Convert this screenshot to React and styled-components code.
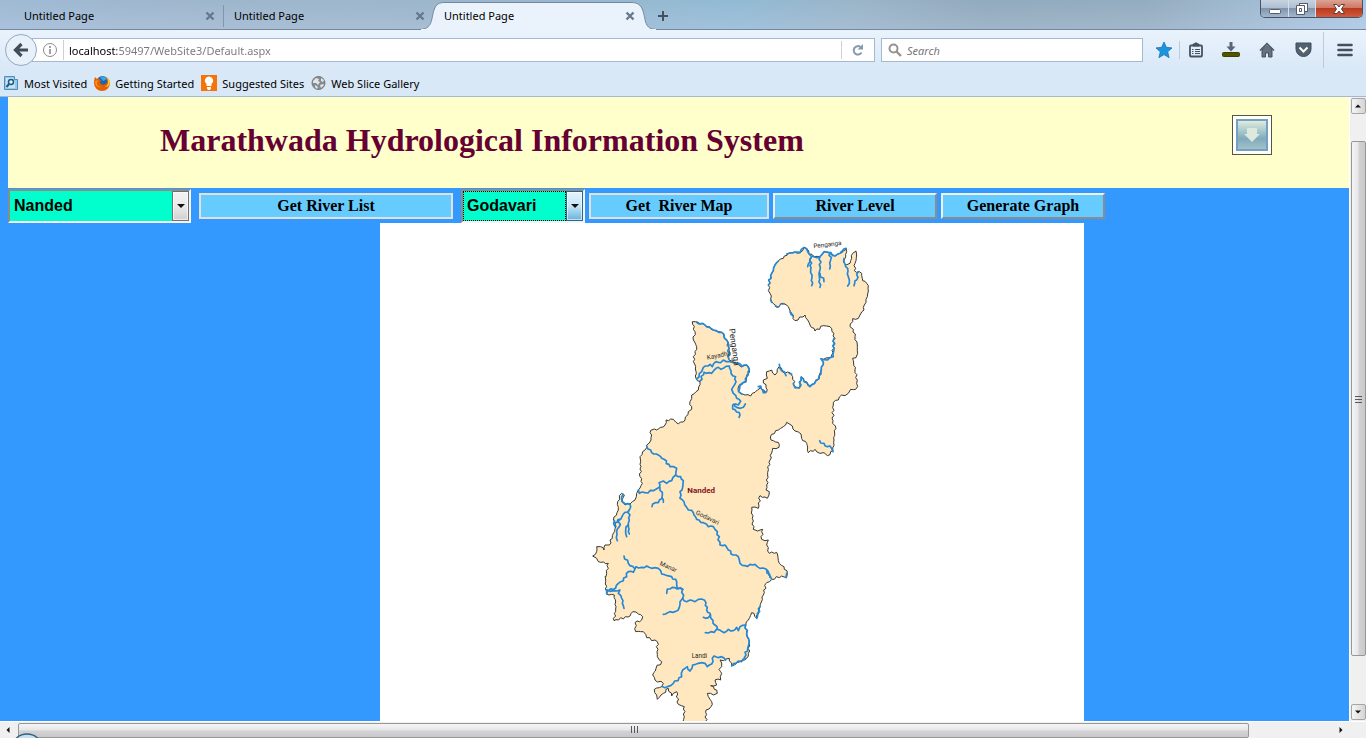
import React from "react";
import styled, { createGlobalStyle, css } from "styled-components";

const GlobalStyle = createGlobalStyle`
  *, *::before, *::after { box-sizing: border-box; }
  body { margin: 0; overflow: hidden; }
  button, input, select { font: inherit; color: inherit; margin: 0; }
  svg { display: block; }
`;

const uiFont = `"Noto Sans", "Open Sans", sans-serif`;

const Window = styled.div`
  display: flex;
  flex-direction: column;
  height: 100vh;
  font-family: ${uiFont};
  font-size: 11px;
  color: #000;
`;

/* Title bar and tabs */

const TitleBar = styled.header`
  display: flex;
  align-items: flex-start;
  height: 30px;
  padding: 0 3px 0 14px;
  border-bottom: 1px solid #7388a0;
  background:
    linear-gradient(180deg, rgba(150, 178, 200, 0.4), rgba(176, 196, 218, 0.5)),
    linear-gradient(90deg, #a4bfdc 0, #a3b9cf 15%, #9fb8cd 32%, #90c0dc 54%, #9db6c8 63%, #8fa5b6 72%, #93a9ba 84%, #a9c4dc 93%, #b9d6f5 100%);
`;

const Tabs = styled.nav`
  display: flex;
  flex: 1;
`;

const Tab = styled.div`
  position: relative;
  display: flex;
  align-items: center;
  justify-content: space-between;
  width: 210px;
  height: 30px;
  padding: 2px 9px 0 10px;
`;

const TabDivider = styled.span`
  width: 1px;
  height: 22px;
  margin: 5px 0 0 -1px;
  background: #8295a9;
`;

const TabShape = styled.svg`
  position: absolute;
  left: -18px;
  top: 0;
`;

const TabLabel = styled.button`
  position: relative;
  padding: 0;
  border: 0;
  background: none;
  line-height: 16px;
`;

const PlainButton = styled.button`
  position: relative;
  display: flex;
  align-items: center;
  justify-content: center;
  padding: 0;
  border: 0;
  background: none;
`;

const NewTabButton = styled(PlainButton)`
  width: 38px;
  height: 32px;
`;

const WindowControls = styled.div`
  display: flex;
  height: 18px;
  border: 1px solid #44536a;
  border-top: 0;
  border-radius: 0 0 5px 5px;
  overflow: hidden;
`;

const ControlButton = styled(PlainButton)`
  width: ${(p) => (p.$close ? 47 : 27)}px;
  border-left: ${(p) => (p.$first ? 0 : 1)}px solid #d5e0ec;
  background: ${(p) =>
    p.$close
      ? "linear-gradient(180deg, #dda293 0, #cf7866 45%, #b93a20 50%, #d3593d 100%)"
      : "linear-gradient(180deg, #c6d2df 0, #b0bfd0 45%, #7f95ad 50%, #a4b8cc 100%)"};
`;

/* Navigation and bookmarks */

const Toolbars = styled.div`
  border-bottom: 1px solid #a5b8d0;
  background: linear-gradient(180deg, #eaf3fc 0, #d9e8f7 60%, #d9e8f7 100%);
`;

const NavBar = styled.div`
  display: flex;
  align-items: center;
  height: 40px;
  padding-left: 5px;
`;

const BackButton = styled(PlainButton)`
  z-index: 1;
  width: 32px;
  height: 32px;
  border: 1px solid #93a9c2;
  border-radius: 50%;
  background: #e8f1fa;
`;

const Field = styled.label`
  display: flex;
  align-items: center;
  height: 24px;
  border: 1px solid #a4b8cf;
  background: #fff;
`;

const AddressField = styled(Field)`
  flex: 1;
  margin: 0 6px 0 -5px;
  padding-left: 9px;
`;

const SearchField = styled(Field)`
  width: 262px;
  padding-left: 6px;
  gap: 5px;
`;

const TextInput = styled.input`
  flex: 1;
  min-width: 0;
  height: 20px;
  padding: 0;
  border: 0;
  outline: 0;
  background: none;
  &::placeholder {
    color: #777;
    font-style: italic;
    opacity: 1;
  }
`;

const AddressInput = styled(TextInput)`
  margin-left: 5px;
  padding-left: 5px;
  border-left: 1px solid #d0d0d0;
  background: linear-gradient(90deg, #000 53px, #777 53px);
  background-clip: text;
  color: transparent;
`;

const ReloadButton = styled(PlainButton)`
  width: 33px;
  height: 18px;
  border-left: 1px solid #d0d0d0;
`;

const ToolButton = styled(PlainButton)`
  width: ${(p) => p.$width}px;
  height: ${(p) => p.$height || 18}px;
  margin-left: ${(p) => p.$before || 0}px;
  ${(p) => p.$divided && css`border-left: 1px solid #bccbdc;`}
`;

const Bookmarks = styled.nav`
  display: flex;
  align-items: center;
  gap: 7px;
  height: 26px;
  padding-left: 3px;
`;

const BookmarkLink = styled.a`
  display: flex;
  align-items: center;
  gap: 5px;
  color: #000;
  text-decoration: none;
  white-space: nowrap;
`;

/* Page */

const Viewport = styled.div`
  display: flex;
  flex: 1;
  min-height: 0;
`;

const PageArea = styled.div`
  flex: 1;
  min-width: 0;
  padding-left: 8px;
  overflow: hidden;
  background: #3399ff;
`;

const Page = styled.main`
  width: 108%;
`;

const Banner = styled.div`
  display: flex;
  align-items: flex-start;
  justify-content: space-between;
  height: 91px;
  padding: 18px 184px 0 152px;
  background: #ffffcc;
`;

const Title = styled.h1`
  margin: 0;
  color: #660033;
  font: bold 32px/50px "Liberation Serif", "Times New Roman", serif;
`;

const DownloadButton = styled(PlainButton)`
  width: 40px;
  height: 40px;
  border: 1px solid #555540;
  background: #fffffb;
`;

const Controls = styled.form`
  display: flex;
  align-items: center;
  gap: 4px;
  height: 35px;
`;

const SelectBox = styled.label`
  display: flex;
  width: ${(p) => p.$width}px;
  height: 34px;
  border: 2px solid;
  border-color: #8c8c88 #f4f4f4 #f4f4f4 #8c8c88;
  background: #00ffcc;
`;

const Select = styled.select`
  flex: 1;
  min-width: 0;
  padding: 0 4px;
  border: 0;
  outline: ${(p) => (p.$focused ? "1px dotted #000" : "0")};
  outline-offset: -1px;
  appearance: none;
  background: #00ffcc;
  font: bold 16px/20px "Liberation Sans", Arial, sans-serif;
`;

const SelectArrow = styled.span`
  display: flex;
  align-items: center;
  justify-content: center;
  width: 17px;
  border: 1px solid ${(p) => (p.$focused ? "#2c628b" : "#707070")};
  background: ${(p) =>
    p.$focused
      ? "linear-gradient(180deg, #e5f4fc 0, #c4e5f6 50%, #68b3db 100%)"
      : "linear-gradient(180deg, #f2f2f2 0, #ebebeb 50%, #cfcfcf 100%)"};
  box-shadow: inset 0 0 0 1px rgba(255, 255, 255, 0.6);
`;

const ActionButton = styled.button`
  width: ${(p) => p.$width}px;
  height: 26px;
  margin: ${(p) => (p.$spaced ? "0 4px" : "0")};
  padding: 0;
  border: 2px solid;
  border-color: ${(p) => (p.$raised ? "#f0f0ec #8c8c8c #8c8c8c #f0f0ec" : "#e0e0e0")};
  background: #66ccff;
  font: bold 16px/20px "Liberation Serif", "Times New Roman", serif;
  white-space: pre;
`;

const MapPanel = styled.section`
  width: 704px;
  margin: 0 auto;
  background: #fff;
`;

/* Scroll bars */

const VerticalScroll = styled.div`
  display: flex;
  flex-direction: column;
  align-items: center;
  justify-content: space-between;
  width: 17px;
  padding: 1px 0;
  background: #f0f0f0;
  border-left: 1px solid #fff;
`;

const ScrollArrow = styled(PlainButton)`
  width: 15px;
  height: 16px;
  ${(p) => p.$framed && css`
    border: 1px solid #a6a6a6;
    border-radius: 2px;
    background: linear-gradient(90deg, #f6f6f6, #d4d4d4);
  `}
`;

const VerticalTrack = styled.div`
  flex: 1;
  width: 15px;
  padding: 27px 0 48px;
`;

const Thumb = styled.div`
  display: flex;
  align-items: center;
  justify-content: center;
  height: 100%;
  border: 1px solid #979797;
  border-radius: 2px;
  background: linear-gradient(${(p) => (p.$horizontal ? 180 : 90)}deg, #f5f5f5 0, #e6e6e8 48%, #d3d3d6 52%, #c9c9cc 100%);
`;

const HorizontalScroll = styled.div`
  display: flex;
  align-items: center;
  position: relative;
  height: 17px;
  padding-right: 18px;
  background: #f0f0f0;
  border-top: 1px solid #fff;
  overflow: hidden;
`;

const HorizontalTrack = styled.div`
  flex: 1;
  height: 15px;
  padding: 0 6.2% 0 3px;
`;

const LoadingRing = styled.svg`
  position: absolute;
  left: 12px;
  top: 11px;
`;

/* Map geometry. One map unit is a third of a pixel. Points are grouped by sheet,
   and each sheet has its own origin inside the map. */

const SHEETS = { ne: [1080, 21], nw: [750, 261], mid: [600, 621], south: [600, 1041] };

const place = (sheet, text) => {
  const [dx, dy] = SHEETS[sheet];
  return text.trim().split(/\s+/).map((pair) => {
    const [x, y] = pair.split(",").map(Number);
    return [x + dx, y + dy];
  });
};

/* Breaks long segments into short uneven ones, as surveyed banks are. */
const roughen = (points, size) => {
  const out = [];
  points.forEach((p, i) => {
    out.push(p);
    const q = points[i + 1];
    if (!q) return;
    const dx = q[0] - p[0];
    const dy = q[1] - p[1];
    const len = Math.hypot(dx, dy);
    const parts = Math.min(8, Math.floor(len / 7));
    for (let k = 1; k < parts; k += 1) {
      const t = k / parts;
      const shift = Math.sin((i + 1) * 5.3 + k * 2.7) * size;
      out.push([p[0] + dx * t - (dy / len) * shift, p[1] + dy * t + (dx / len) * shift]);
    }
  });
  return out;
};

const toPath = (points) => "M" + points.map(([x, y]) => `${Math.round(x)} ${Math.round(y)}`).join("L");

const border = toPath(roughen([
  ...place("ne", `85,165 95,130 105,105 115,93 130,85 145,70 165,66 180,68 192,52 200,55 207,72 222,80 240,80 252,65
    265,67 285,78 300,70 318,55 320,65 312,90 318,105 330,100 338,70 348,63 350,75 345,100 343,122 365,130 368,152
    380,160 384,175 382,200 373,225 372,240 360,255 355,265 338,266 330,290 340,298 345,320 352,345 353,370 348,383
    338,385 345,420 352,450 353,470 347,478 332,478 325,490 315,497 305,495 295,510 280,517 278,580 286,588 282,630
    279,662 262,677 252,668 240,670 225,658 205,668 200,640 185,625 183,612 165,603 150,583 140,577 130,590 115,600
    95,613 93,630 115,637 117,652 98,655 90,690 85,718`),
  ...place("mid", `565,120 560,165 558,180 568,185 562,205 540,197 535,235 515,232 517,265 520,298 533,303 548,298
    545,328 565,330 560,345 568,370 590,367 598,400 612,410 622,430 620,442 605,438 575,448 560,458`),
  ...place("south", `558,40 550,75 540,110 530,145 522,130 515,128 505,150 497,165 500,190 508,220 505,250 500,265
    480,275 455,287 448,265 430,272 420,270 425,290 417,298 425,310 422,330 405,330 410,345 392,347 410,360 412,370
    400,375 382,370 390,388 395,395 393,410 378,420 378,470 310,470 313,410 295,403 290,365 280,370 275,378 265,355
    250,370 232,388 230,375 223,358 245,350 250,340 225,330 218,315 228,295 245,275 232,260 232,215 200,203 190,185
    167,185 165,158 185,150 188,140 175,132 158,125 150,138 102,152 108,110 103,75 80,72 75,20`),
  ...place("mid", `78,440 80,430 85,400 55,395 50,385 38,378 50,365 50,350 62,350 72,360 75,345 88,345 100,310 108,290
    105,275 100,270 115,240 113,215 125,190 133,195 125,215 135,225 150,222 165,210 170,190 175,180 187,160 180,140
    183,110 180,80 195,60 200,45 213,30 213,0`),
  ...place("nw", `65,360 80,360 105,345 108,330 130,328 145,342 165,330 175,305 185,298 180,275 185,255 205,240
    210,215 198,205 197,170 190,155 195,125 200,110 190,90 195,65 187,35 205,37 225,45 250,60 275,67 290,90 297,120
    297,150 310,155 325,160 335,170 350,165 358,180 350,200 348,215 328,225 325,245 345,255 362,258 375,247 390,235
    392,228 405,250 412,240 400,210 412,205 410,185 425,180 435,195 447,170`),
  ...place("ne", `117,410 135,430 150,428 158,440 165,470 178,475 183,440 210,470 238,445 242,425 250,395 242,387
    275,382 282,340 282,310 270,290 250,287 225,303 210,285 195,255 165,272 155,250 145,230 130,220 110,232 95,215
    90,190 85,165`),
], 3)) + "Z";

const rivers = [
  ["ne", "85,165 95,130 105,105 115,93"],
  ["ne", "140,72 150,69 165,66 180,68 192,52 200,57 207,72 222,80 240,80 252,65 265,67 285,78 300,70 318,55"],
  ["ne", "92,210 95,217"],
  ["ne", "106,228 114,231"],
  ["ne", "125,222 132,222"],
  ["ne", "150,245 160,258"],
  ["ne", "215,80 210,95 203,110"],
  ["ne", "212,85 212,120 216,135 215,167"],
  ["ne", "240,80 240,120 238,140 240,172"],
  ["ne", "240,130 252,155"],
  ["ne", "269,68 272,90 269,117"],
  ["ne", "312,85 315,102 323,115 325,140 328,150 323,168"],
  ["ne", "355,125 350,150 345,152 342,167"],
  ["ne", "282,325 280,380 262,390 243,386 250,397 244,412 243,432 236,447 210,470 183,442 179,472 166,474 160,460"],
  ["ne", "118,403 120,415 133,425 138,437"],
  ["ne", "148,430 155,432"],
  ["ne", "239,632 255,647 270,648 279,665"],
  ["nw", "200,37 225,45 250,60 275,67 290,90 295,100 296,145"],
  ["nw", "200,207 215,185 220,172 240,163 247,170 258,155 272,158 280,150 300,155 325,160 335,170 350,165 358,180 350,200 348,215 330,225 326,245 335,252"],
  ["nw", "210,213 222,187 245,190 258,175 280,175 298,168 303,190 317,200 315,222 305,238 310,250 320,265 332,273 325,285 308,285 308,297 328,308 327,322"],
  ["nw", "312,282 322,293 340,292 346,282"],
  ["nw", "385,230 392,228 400,248 410,245"],
  ["mid", "200,48 215,68 235,75 252,88 270,110 290,115 287,135 302,140 310,152 308,172 300,185 300,205 312,215 320,232 340,248 350,268 370,278 385,290 400,290 412,305 420,345 435,345 445,360 460,375 475,380 480,400 495,407 525,403 540,415 558,417 567,435 575,448"],
  ["mid", "287,135 275,152 260,160 250,153 237,158 238,172 220,182 195,188 178,190 175,180"],
  ["mid", "240,173 247,195 250,217"],
  ["mid", "247,205 235,218 218,222 216,230"],
  ["mid", "130,193 125,208 135,222 150,222 148,240 130,252 122,268 103,278"],
  ["mid", "118,268 118,290 110,305 112,332"],
  ["mid", "147,240 148,270 145,290 148,312"],
  ["mid", "145,285 137,300 140,320"],
  ["mid", "103,272 105,290"],
  ["mid", "132,378 145,400 163,415"],
  ["mid", "78,479 100,479 115,460 130,452 145,425 160,427 168,410 185,412 200,408 215,415 235,415 245,432 262,437 275,440 290,455 292,475 308,478"],
  ["mid", "620,430 618,443"],
  ["south", "80,60 100,62 120,60 115,70 125,85 132,115"],
  ["south", "80,60 80,72"],
  ["south", "308,58 285,53 262,57 260,70"],
  ["south", "308,58 308,85 300,95 298,112 285,125 270,125 250,133"],
  ["south", "308,85 320,95 330,90 345,95 355,88 373,90 378,98 380,120 390,130 393,145 405,165 412,178 432,188 445,178 460,182 470,172 475,182 480,170 497,165"],
  ["south", "370,142 385,143 392,135"],
  ["south", "376,188 393,185 403,187 412,176"],
  ["south", "497,165 500,190 508,215 503,235 493,262"],
  ["south", "497,265 485,275 475,273 455,288"],
  ["south", "248,350 262,350 272,347 280,340 305,320 308,300 322,290 330,303 338,285 355,280 375,280 382,290 395,282 402,258 415,263 425,260 437,270"],
  ["south", "540,110 530,145"],
  ["south", "560,0 570,22"],
].map(([sheet, text]) => toPath(roughen(place(sheet, text), 3)));

const mapFont = `Roboto, "Liberation Sans", sans-serif`;

function RiverMap() {
  return (
    <svg viewBox="0 0 2112 1494" width="100%" role="img" aria-label="River map of Nanded district">
      <path d={border} fill="#ffe8bf" stroke="#383834" strokeWidth="3" strokeLinejoin="round" />
      <g fill="none" stroke="#2388d6" strokeWidth="5" strokeLinejoin="round" strokeLinecap="round">
        {rivers.map((d) => <path key={d} d={d} />)}
      </g>
      <g fill="#2a2622" fontFamily={mapFont} fontSize="19">
        <text transform="translate(1301 76) rotate(-7)">Penganga</text>
        <text transform="translate(1047 318) rotate(82)" fontSize="25">Penganga</text>
        <text transform="translate(982 410) rotate(-11)">Kayadhu</text>
        <text transform="translate(946 873) rotate(26)">Godavari</text>
        <text transform="translate(838 1026) rotate(24)">Manar</text>
        <text x="935" y="1305">Landi</text>
      </g>
      <text x="922" y="811" fill="#84141a" fontFamily={mapFont} fontSize="24" fontWeight="bold">Nanded</text>
    </svg>
  );
}

/* Icons */

const Cross = ({ color = "#66788b" }) => (
  <svg width="10" height="10" viewBox="0 0 10 10"><path d="M1.500 1.500l7 7M8.500 1.500l-7 7" stroke={color} strokeWidth="2.4" /></svg>
);

const icons = {
  back: <svg width="18" height="18" viewBox="0 0 18 18"><path d="M9.500 3L3.500 9l6 6M4 9h12" fill="none" stroke="#414d57" strokeWidth="3.200" /></svg>,
  info: (
    <svg width="16" height="16" viewBox="0 0 16 16">
      <circle cx="8" cy="8" r="6.500" fill="none" stroke="#8b8b8b" />
      <path d="M8 7v5M8 4v2" stroke="#8b8b8b" strokeWidth="1.600" />
    </svg>
  ),
  reload: <svg width="14" height="14" viewBox="0 0 14 14"><path d="M10.500 9.500A4.200 4.200 0 1 1 9.500 4" fill="none" stroke="#8799ab" strokeWidth="2" /><path d="M6.500 6.500h5.500v-5.500z" fill="#8799ab" /></svg>,
  search: <svg width="14" height="14" viewBox="0 0 14 14"><circle cx="5.500" cy="5.500" r="4" fill="none" stroke="#939393" strokeWidth="2" /><path d="M8.500 8.500l4.500 4.500" stroke="#939393" strokeWidth="2.400" /></svg>,
  star: <svg width="18" height="18" viewBox="0 0 18 18"><path d="M9 1l2.300 5.300 5.700.6-4.300 3.900 1.400 5.900L9 13.600l-5.100 3.100 1.400-5.900L1 6.900l5.700-.6z" fill="#1c94db" stroke="#1675b8" strokeWidth=".8" /></svg>,
  list: (
    <svg width="16" height="16" viewBox="0 0 16 16" fill="none" stroke="#465361">
      <rect x="2" y="3.500" width="12" height="11" rx="1" strokeWidth="1.800" />
      <path d="M5 4V2h1.500L7 1h2l.5 1H11v2z" fill="#465361" />
      <path d="M4 7.500h1.500M7 7.500h5M4 9.500h1.500M7 9.500h5M4 11.500h1.500M7 11.500h5" />
    </svg>
  ),
  download: (
    <svg width="18" height="18" viewBox="0 0 18 18">
      <path d="M7.500 1h3v4.500h3L9 10.500 4.500 5.500h3z" fill="#596678" />
      <rect x=".5" y="11.500" width="17" height="4" rx="1" fill="#515300" stroke="#3c4200" />
    </svg>
  ),
  home: <svg width="16" height="16" viewBox="0 0 16 16"><path d="M8 3.500l5 4.500v7H9.500v-4h-3v4H3V8z" fill="#667282" stroke="#465361" /><path d="M1 8.500l7-7 7 7" fill="none" stroke="#465361" strokeWidth="1.500" /></svg>,
  pocket: <svg width="17" height="16" viewBox="0 0 17 16"><path d="M1 1h15v6a7.500 7.500 0 0 1-15 0z" fill="#536171" stroke="#414d5a" /><path d="M4.500 5.500l4 4 4-4" fill="none" stroke="#fff" strokeWidth="2" /></svg>,
  menu: <svg width="16" height="14" viewBox="0 0 16 14"><path d="M1.500 2h13M1.500 7h13M1.500 12h13" stroke="#43505d" strokeWidth="2.600" strokeLinecap="round" /></svg>,
  visited: (
    <svg width="16" height="16" viewBox="0 0 16 16">
      <path d="M1.500 1.500h10v3h3v10h-13z" fill="#9dc8e4" stroke="#4c8eb9" />
      <path d="M3 3h7v3h2v7H3z" fill="#c5e3f3" />
      <circle cx="8" cy="7" r="2.500" fill="#dff1fa" stroke="#1d5c88" strokeWidth="1.500" />
      <path d="M6 9l-2.500 3" stroke="#1d5c88" strokeWidth="2" />
    </svg>
  ),
  firefox: (
    <svg width="16" height="16" viewBox="0 0 16 16">
      <circle cx="8.500" cy="7" r="6" fill="#1e65b4" />
      <path d="M6 2c3-1 6 0 7 2L9 6z" fill="#38a7df" />
      <path d="M1 2l2 2 2-1c0 1 .5 2 2 2.500L6 7c0 3 4 4 7 1 .5-2 .3-4-1-6 3 1.500 4 4 4 6a8 8 0 0 1-16 0c0-3 .5-4 1-6z" fill="#e66000" />
      <path d="M12 2c3 3 3 8-1 10 4 0 5-3 4.800-6C15 4 14 3 12 2z" fill="#ffcb29" />
      <path d="M1 6l3-1-1 3c0 3 3 4 5 4-4 1-7-1-7-6z" fill="#f6921e" />
    </svg>
  ),
  bulb: (
    <svg width="16" height="16" viewBox="0 0 16 16">
      <rect width="16" height="16" fill="#f57409" />
      <path d="M8 1.500a4 4 0 0 1 2.500 7.200V11h-5V8.700A4 4 0 0 1 8 1.500zM6 12h4v1.500L9 15H7l-1-1.500z" fill="#fff" />
    </svg>
  ),
  globe: (
    <svg width="15" height="16" viewBox="0 0 15 16">
      <circle cx="7.500" cy="8" r="6.500" fill="#868b90" stroke="#74797e" />
      <path d="M2 6l3-3 3 1-1 2 2 1-2 3-2-2-3 0zM10 3l3 2-1 2-2-1zM9 10l3-1 1 1-3 3zM4 10l3 2-1 2-2-2z" fill="#e3e6e8" />
    </svg>
  ),
  plus: <svg width="12" height="12" viewBox="0 0 12 12"><path d="M6 1v10M1 6h10" stroke="#43525f" strokeWidth="2" /></svg>,
  minimize: <svg width="14" height="12" viewBox="0 0 14 12"><rect x="1.500" y="6.500" width="11" height="4" rx="1" fill="#fff" stroke="#535d6d" /></svg>,
  restore: (
    <svg width="14" height="14" viewBox="0 0 14 14" fill="#fff" stroke="#535d6d">
      <rect x="4.500" y="1.500" width="8" height="8" />
      <path d="M1.500 3.500h8v9h-8zM4.500 6.500h2v3h-2z" fillRule="evenodd" />
    </svg>
  ),
  close: <svg width="14" height="12" viewBox="0 0 14 12"><path d="M1.500 1.500h3.500l2 2.500 2-2.500h3.500L9.500 6l3 4.500H9L7 8l-2 2.500H1.500l3-4.500z" fill="#fff" stroke="#59413f" /></svg>,
  downArrow: (
    <svg width="32" height="32" viewBox="0 0 32 32">
      <defs>
        <linearGradient id="glass" x1="0" y1="0" x2="0" y2="1">
          <stop offset="0" stopColor="#e6f0dd" />
          <stop offset=".5" stopColor="#92b9c6" />
          <stop offset=".62" stopColor="#82aabb" />
          <stop offset="1" stopColor="#a4c4cb" />
        </linearGradient>
      </defs>
      <rect x="1" y="1" width="30" height="30" fill="url(#glass)" stroke="#74a0c4" strokeWidth="2" />
      <path d="M11 9h10v6h3l-8 8-8-8h3z" fill="#dce9dc" />
    </svg>
  ),
};

const Triangle = ({ turn = 0, size = 8 }) => (
  <svg width={size} height={size} viewBox="0 0 8 8"><path d="M0 2h8L4 6z" fill="#111" transform={`rotate(${turn} 4 4)`} /></svg>
);

const Grip = ({ turn = 0 }) => (
  <svg width="8" height="8" viewBox="0 0 8 8"><path d="M1.500 0v7M4.500 0v7M7.500 0v7" stroke="#55585c" transform={`rotate(${turn} 4 4)`} /></svg>
);

function BrowserTab({ active }) {
  return (
    <Tab>
      {active && (
        <TabShape width="246" height="30" viewBox="0 0 246 30" aria-hidden="true">
          <path d="M0 29.500H3C17 29.500 15 19 18 10C20 4 23 2.500 29 2.500H215C222 2.500 225 5 227 11C230 20 228 29.500 241 29.500H246" fill="#eaf3fc" stroke="#7388a0" />
          <path d="M5 29.500H240" stroke="#eaf3fc" strokeWidth="1" />
        </TabShape>
      )}
      <TabLabel>Untitled Page</TabLabel>
      <PlainButton aria-label="Close tab"><Cross /></PlainButton>
    </Tab>
  );
}

function Dropdown({ label, options, width, focused }) {
  return (
    <SelectBox $width={width}>
      <Select aria-label={label} $focused={focused} defaultValue={options[0]}>
        {options.map((o) => <option key={o}>{o}</option>)}
      </Select>
      <SelectArrow $focused={focused}><Triangle /></SelectArrow>
    </SelectBox>
  );
}

const bookmarks = [
  ["visited", "Most Visited"],
  ["firefox", "Getting Started"],
  ["bulb", "Suggested Sites"],
  ["globe", "Web Slice Gallery"],
];

export default function App() {
  return (
    <Window>
      <GlobalStyle />
      <TitleBar>
        <Tabs aria-label="Tabs">
          <BrowserTab />
          <TabDivider />
          <BrowserTab />
          <BrowserTab active />
          <NewTabButton aria-label="New tab">{icons.plus}</NewTabButton>
        </Tabs>
        <WindowControls>
          <ControlButton $first aria-label="Minimize">{icons.minimize}</ControlButton>
          <ControlButton aria-label="Restore">{icons.restore}</ControlButton>
          <ControlButton $close aria-label="Close">{icons.close}</ControlButton>
        </WindowControls>
      </TitleBar>
      <Toolbars>
        <NavBar>
          <BackButton aria-label="Back">{icons.back}</BackButton>
          <AddressField>
            {icons.info}
            <AddressInput aria-label="Address" defaultValue="localhost:59497/WebSite3/Default.aspx" />
            <ReloadButton aria-label="Reload">{icons.reload}</ReloadButton>
          </AddressField>
          <SearchField>
            {icons.search}
            <TextInput aria-label="Search" placeholder="Search" />
          </SearchField>
          <ToolButton $width={30} $before={6} aria-label="Bookmark">{icons.star}</ToolButton>
          <ToolButton $width={32} $divided aria-label="Bookmarks list">{icons.list}</ToolButton>
          <ToolButton $width={40} aria-label="Downloads">{icons.download}</ToolButton>
          <ToolButton $width={32} aria-label="Home">{icons.home}</ToolButton>
          <ToolButton $width={40} aria-label="Pocket">{icons.pocket}</ToolButton>
          <ToolButton $width={43} $height={36} $divided aria-label="Menu">{icons.menu}</ToolButton>
        </NavBar>
        <Bookmarks aria-label="Bookmarks">
          {bookmarks.map(([icon, name]) => (
            <BookmarkLink key={name} href="#">{icons[icon]}{name}</BookmarkLink>
          ))}
        </Bookmarks>
      </Toolbars>
      <Viewport>
        <PageArea>
          <Page>
            <Banner>
              <Title>Marathwada Hydrological Information System</Title>
              <DownloadButton aria-label="Download">{icons.downArrow}</DownloadButton>
            </Banner>
            <Controls onSubmit={(e) => e.preventDefault()}>
              <Dropdown label="District" options={["Nanded"]} width={183} />
              <ActionButton $width={254} $spaced>Get River List</ActionButton>
              <Dropdown label="River" options={["Godavari"]} width={124} focused />
              <ActionButton $width={180}>{"Get  River Map"}</ActionButton>
              <ActionButton $width={164} $raised>River Level</ActionButton>
              <ActionButton $width={164} $raised>Generate Graph</ActionButton>
            </Controls>
            <MapPanel><RiverMap /></MapPanel>
          </Page>
        </PageArea>
        <VerticalScroll>
          <ScrollArrow $framed aria-label="Scroll up"><Triangle turn={180} size={6} /></ScrollArrow>
          <VerticalTrack><Thumb><Grip turn={90} /></Thumb></VerticalTrack>
          <ScrollArrow $framed aria-label="Scroll down"><Triangle size={6} /></ScrollArrow>
        </VerticalScroll>
      </Viewport>
      <HorizontalScroll>
        <ScrollArrow aria-label="Scroll left"><Triangle turn={90} size={6} /></ScrollArrow>
        <HorizontalTrack><Thumb $horizontal><Grip /></Thumb></HorizontalTrack>
        <ScrollArrow aria-label="Scroll right"><Triangle turn={270} size={6} /></ScrollArrow>
        <LoadingRing width="30" height="8" viewBox="0 0 30 8" aria-hidden="true">
          <ellipse cx="15" cy="13" rx="14" ry="12" fill="#c9dfec" stroke="#2d6484" strokeWidth="1.500" />
        </LoadingRing>
      </HorizontalScroll>
    </Window>
  );
}
